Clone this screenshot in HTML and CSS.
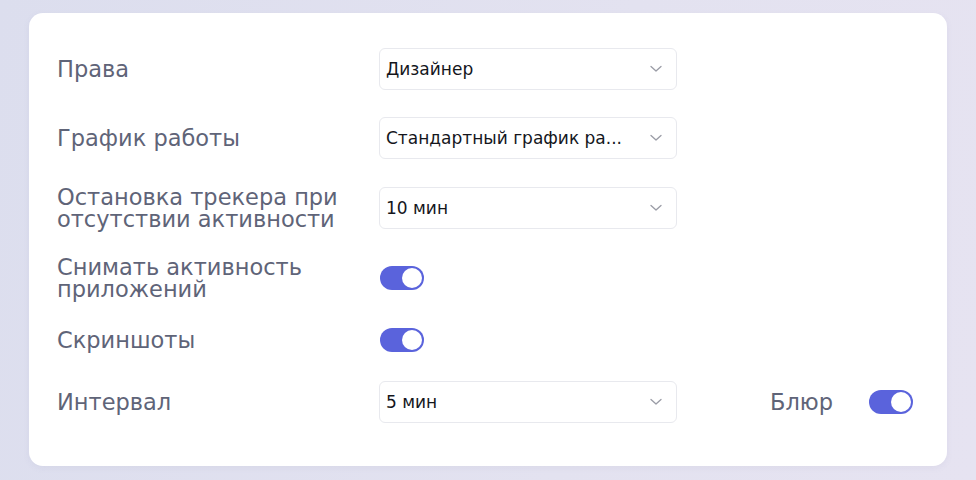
FILE: index.html
```html
<!DOCTYPE html>
<html lang="ru">
<head>
<meta charset="utf-8">
<title>Настройки сотрудника</title>
<link rel="stylesheet" href="styles.css">
</head>
<body>
<main class="page">
  <section class="card">
    <div class="row row-select">
      <div class="label">Права</div>
      <div class="select"><span class="select-value">Дизайнер</span><svg class="chevron" viewBox="0 0 12 8" width="12" height="8"><path d="M1 1.5l5 4.5 5-4.5" fill="none" stroke="#9a9ca6" stroke-width="1.3" stroke-linecap="round" stroke-linejoin="round"/></svg></div>
    </div>
    <div class="row row-select">
      <div class="label">График работы</div>
      <div class="select" title="Стандартный график работы"><span class="select-value">Стандартный график ра...</span><svg class="chevron" viewBox="0 0 12 8" width="12" height="8"><path d="M1 1.5l5 4.5 5-4.5" fill="none" stroke="#9a9ca6" stroke-width="1.3" stroke-linecap="round" stroke-linejoin="round"/></svg></div>
    </div>
    <div class="row row-select">
      <div class="label">Остановка трекера при отсутствии активности</div>
      <div class="select"><span class="select-value">10 мин</span><svg class="chevron" viewBox="0 0 12 8" width="12" height="8"><path d="M1 1.5l5 4.5 5-4.5" fill="none" stroke="#9a9ca6" stroke-width="1.3" stroke-linecap="round" stroke-linejoin="round"/></svg></div>
    </div>
    <div class="row row-toggle">
      <div class="label">Снимать активность приложений</div>
      <span class="toggle is-on"><span class="knob"></span></span>
    </div>
    <div class="row row-toggle">
      <div class="label">Скриншоты</div>
      <span class="toggle is-on"><span class="knob"></span></span>
    </div>
    <div class="row row-select">
      <div class="label">Интервал</div>
      <div class="select"><span class="select-value">5 мин</span><svg class="chevron" viewBox="0 0 12 8" width="12" height="8"><path d="M1 1.5l5 4.5 5-4.5" fill="none" stroke="#9a9ca6" stroke-width="1.3" stroke-linecap="round" stroke-linejoin="round"/></svg></div>
      <div class="extra">
        <span class="extra-label">Блюр</span>
        <span class="toggle is-on"><span class="knob"></span></span>
      </div>
    </div>
  </section>
</main>
</body>
</html>
```

FILE: styles.css
```css
* { box-sizing: border-box; }

html, body {
  margin: 0;
  height: 100%;
}

body {
  font-family: "DejaVu Sans", Inter, sans-serif;
  background: linear-gradient(100deg, #dcdeee 0%, #e3e2f0 60%, #e6e3f1 100%);
}

.page {
  padding: 13px 29px 13px 29px;
}

.card {
  background: #ffffff;
  border-radius: 14px;
  padding: 35px 34px 43px 28px;
  display: flex;
  flex-direction: column;
  box-shadow: 0 2px 6px rgba(120, 120, 170, 0.08);
}

.row {
  display: flex;
  align-items: center;
}

.row-select { height: 42px; }
.row-select + .row-select { margin-top: 27px; }
.row-select:nth-child(3) { margin-top: 28px; }

.row-toggle { height: 44px; }
.row:nth-child(4) { margin-top: 27px; }
.row:nth-child(5) { margin-top: 18px; }
.row:nth-child(6) { margin-top: 19px; }

.label {
  width: 322px;
  flex: none;
  color: #5f6478;
  font-size: 22.5px;
  line-height: 22px;
  padding-right: 10px;
}

.select {
  width: 298px;
  height: 42px;
  flex: none;
  border: 1px solid #e8e9ee;
  border-radius: 6px;
  display: flex;
  align-items: center;
  padding: 0 14px 0 6px;
  color: #14161c;
  font-size: 17px;
}

.select-value {
  flex: 1;
  min-width: 0;
  white-space: nowrap;
  padding-right: 16px;
}

.chevron { flex: none; }

.toggle {
  width: 44px;
  height: 24px;
  border-radius: 12px;
  background: #cfd1dc;
  position: relative;
  flex: none;
  margin-left: 1px;
}

.toggle.is-on { background: #5a63dc; }

.knob {
  position: absolute;
  top: 2px;
  left: 2px;
  width: 20px;
  height: 20px;
  border-radius: 50%;
  background: #ffffff;
}

.toggle.is-on .knob { left: 22px; }

.extra {
  margin-left: auto;
  display: flex;
  align-items: center;
  gap: 35px;
}

.extra-label {
  color: #5f6478;
  font-size: 22.5px;
}
```
